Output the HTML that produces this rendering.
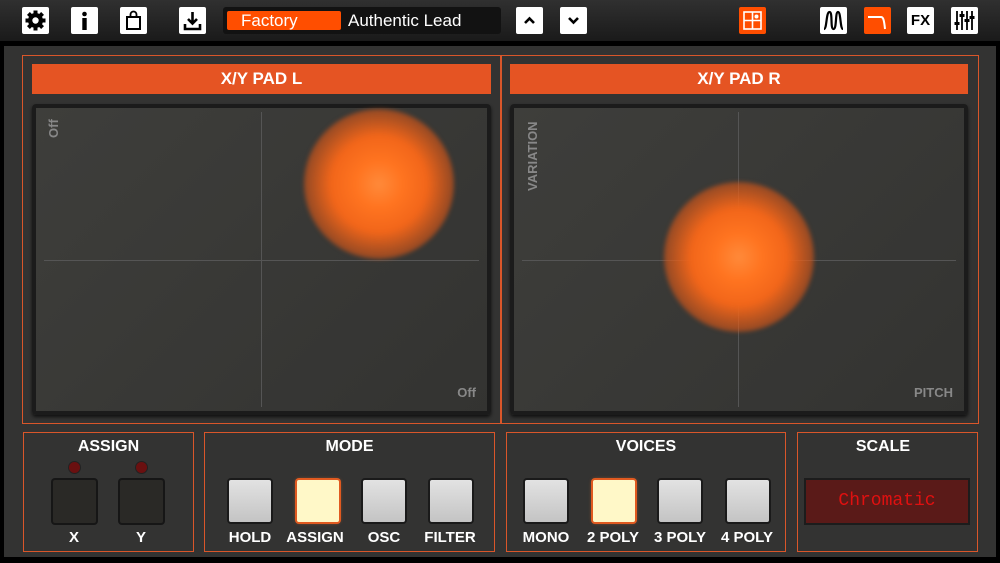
<!DOCTYPE html>
<html><head><style>
*{margin:0;padding:0;box-sizing:border-box}
body{width:1000px;height:563px;background:#000;position:relative;overflow:hidden;font-family:"Liberation Sans",sans-serif}
.a{position:absolute}
.top{left:0;top:0;width:1000px;height:41px;background:linear-gradient(#303030,#1a1a1a)}
.ib{position:absolute;top:7px;width:27px;height:27px;background:#fff;border-radius:2px}
.ib svg{position:absolute;left:0;top:0}
.panel{left:4px;top:46px;width:992px;height:511px;background:#333332}
.ob{position:absolute;border:1.5px solid #d9562a}
.hd{position:absolute;background:#e55423;color:#fff;font-weight:bold;font-size:17px;text-align:center;line-height:30px;height:30px}
.pad{position:absolute;background:linear-gradient(135deg,#3e3e3b,#333331);border-radius:4px;box-shadow:inset 0 0 0 4px #1b1b1b, 0 2px 3px #111}
.lbl{position:absolute;color:#fff;font-weight:bold;text-align:center}
.bt{position:absolute;top:480px;width:42px;height:42px;border-radius:2px;background:linear-gradient(#e2e2e2,#c4c4c4);box-shadow:0 0 0 2px #1a1a1a}
.on{background:#fff8c8;box-shadow:0 0 0 2px #e05a20,0 0 4px #f07030}
.bl{position:absolute;top:529px;color:#fff;font-weight:bold;font-size:15px;width:80px;text-align:center}
.blob{position:absolute;width:150px;height:150px;border-radius:50%;background:radial-gradient(circle,#ff8a3a 0,#ff7420 22%,#f2661a 45%,rgba(225,88,22,.55) 70%,rgba(200,80,20,0) 100%);filter:blur(2px)}
</style></head><body>
<div class="a top"></div>
<div class="ib" style="left:22px"><svg width="27" height="27"><g transform="translate(13.5 13.5)" fill="#000"><circle r="7.5"/><g><rect x="-2" y="-10" width="4" height="20"/><rect x="-10" y="-2" width="20" height="4"/><rect x="-2" y="-10" width="4" height="20" transform="rotate(45)"/><rect x="-2" y="-10" width="4" height="20" transform="rotate(-45)"/></g><circle r="3.2" fill="#fff"/></g></svg></div>
<div class="ib" style="left:71px"><svg width="27" height="27"><circle cx="13.5" cy="7" r="2.3"/><rect x="11.3" y="11" width="4.4" height="12"/></svg></div>
<div class="ib" style="left:120px"><svg width="27" height="27"><rect x="7" y="10" width="13" height="12" fill="none" stroke="#000" stroke-width="2"/><path d="M10.5 10V7.5a3 3 0 0 1 6 0V10" fill="none" stroke="#000" stroke-width="1.8"/></svg></div>
<div class="ib" style="left:179px"><svg width="27" height="27"><path d="M13.5 5v11M9 12l4.5 4.5L18 12M6 17v5h15v-5" fill="none" stroke="#000" stroke-width="2.6"/></svg></div>
<div class="a" style="left:223px;top:7px;width:278px;height:27px;background:#121212;border-radius:3px"></div>
<div class="a" style="left:227px;top:11px;width:114px;height:19px;background:#ff4e00;border-radius:2px;color:#fff;font-size:17px;line-height:19px;padding-left:14px">Factory</div>
<div class="a" style="left:348px;top:11px;color:#fff;font-size:17px;line-height:19px">Authentic Lead</div>
<div class="ib" style="left:516px"><svg width="27" height="27"><path d="M9 16l4.5-4.5L18 16" fill="none" stroke="#000" stroke-width="2.6"/></svg></div>
<div class="ib" style="left:560px"><svg width="27" height="27"><path d="M9 11l4.5 4.5L18 11" fill="none" stroke="#000" stroke-width="2.6"/></svg></div>
<div class="ib" style="left:739px;background:#ff4e00"><svg width="27" height="27"><rect x="5" y="5" width="17" height="17" fill="none" stroke="#fff" stroke-width="1.6"/><path d="M13.5 5v17M5 13.5h17" stroke="#fff" stroke-width="1.6"/><circle cx="17.5" cy="9.5" r="2" fill="#fff"/></svg></div>
<div class="ib" style="left:820px"><svg width="27" height="27"><path d="M4 22c3 0 2-17 5.5-17S10 22 13.5 22 15 5 18 5s2 17 5 17" fill="none" stroke="#000" stroke-width="2.2"/></svg></div>
<div class="ib" style="left:864px;background:#ff4e00"><svg width="27" height="27"><path d="M4 10h13c2 0 3 2 4 12" fill="none" stroke="#fff" stroke-width="2"/></svg></div>
<div class="ib" style="left:907px"><div style="position:absolute;left:0;top:0;width:27px;text-align:center;font-weight:bold;font-size:15px;line-height:27px;color:#000">FX</div></div>
<div class="ib" style="left:951px"><svg width="27" height="27"><path d="M6 4v19M11 4v19M16 4v19M21 4v19" stroke="#000" stroke-width="1.8"/><rect x="3.5" y="15" width="5" height="3"/><rect x="8.5" y="7" width="5" height="3"/><rect x="13.5" y="12" width="5" height="3"/><rect x="18.5" y="9" width="5" height="3"/></svg></div>

<div class="a panel"></div>
<div class="ob" style="left:22px;top:55px;width:957px;height:369px"></div>
<div class="a" style="left:500px;top:56px;width:1.5px;height:367px;background:#d9562a"></div>
<div class="hd" style="left:32px;top:64px;width:459px">X/Y PAD L</div>
<div class="hd" style="left:510px;top:64px;width:458px">X/Y PAD R</div>
<div class="pad" style="left:32px;top:104px;width:459px;height:311px;overflow:hidden">
<div class="a" style="left:229px;top:8px;width:1px;height:295px;background:#555"></div>
<div class="a" style="left:12px;top:156px;width:435px;height:1px;background:#555"></div>
<div class="blob" style="left:272px;top:5px"></div>
<div class="a" style="left:14px;top:34px;color:#888;font-size:13px;font-weight:bold;transform:rotate(-90deg);transform-origin:left top">Off</div>
<div class="a" style="right:15px;top:281px;color:#888;font-size:13px;font-weight:bold">Off</div>
</div>
<div class="pad" style="left:510px;top:104px;width:458px;height:311px;overflow:hidden">
<div class="a" style="left:228px;top:8px;width:1px;height:295px;background:#555"></div>
<div class="a" style="left:12px;top:156px;width:434px;height:1px;background:#555"></div>
<div class="blob" style="left:154px;top:78px"></div>
<div class="a" style="left:15px;top:87px;color:#888;font-size:13px;font-weight:bold;transform:rotate(-90deg);transform-origin:left top">VARIATION</div>
<div class="a" style="right:15px;top:281px;color:#888;font-size:13px;font-weight:bold">PITCH</div>
</div>

<div class="ob" style="left:23px;top:432px;width:171px;height:120px"></div>
<div class="ob" style="left:204px;top:432px;width:291px;height:120px"></div>
<div class="ob" style="left:506px;top:432px;width:280px;height:120px"></div>
<div class="ob" style="left:797px;top:432px;width:181px;height:120px"></div>
<div class="lbl" style="left:23px;top:438px;width:171px;font-size:16px">ASSIGN</div>
<div class="lbl" style="left:204px;top:438px;width:291px;font-size:16px">MODE</div>
<div class="lbl" style="left:506px;top:438px;width:280px;font-size:16px">VOICES</div>
<div class="lbl" style="left:797px;top:438px;width:172px;font-size:16px">SCALE</div>

<div class="a" style="left:69px;top:462px;width:11px;height:11px;border-radius:50%;background:#6a1010;box-shadow:0 0 0 1px #222"></div>
<div class="a" style="left:136px;top:462px;width:11px;height:11px;border-radius:50%;background:#6a1010;box-shadow:0 0 0 1px #222"></div>
<div class="bt" style="left:53px;width:43px;height:43px;background:#2a2926;box-shadow:0 0 0 2px #161616"></div>
<div class="bt" style="left:120px;width:43px;height:43px;background:#2a2926;box-shadow:0 0 0 2px #161616"></div>
<div class="bl" style="left:34px">X</div>
<div class="bl" style="left:101px">Y</div>

<div class="bt" style="left:229px"></div>
<div class="bt on" style="left:297px"></div>
<div class="bt" style="left:363px"></div>
<div class="bt" style="left:430px"></div>
<div class="bl" style="left:210px">HOLD</div>
<div class="bl" style="left:275px">ASSIGN</div>
<div class="bl" style="left:344px">OSC</div>
<div class="bl" style="left:410px">FILTER</div>

<div class="bt" style="left:525px"></div>
<div class="bt on" style="left:593px"></div>
<div class="bt" style="left:659px"></div>
<div class="bt" style="left:727px"></div>
<div class="bl" style="left:506px">MONO</div>
<div class="bl" style="left:573px">2 POLY</div>
<div class="bl" style="left:640px">3 POLY</div>
<div class="bl" style="left:707px">4 POLY</div>

<div class="a" style="left:806px;top:480px;width:162px;height:43px;background:#5a1a18;box-shadow:0 0 0 2px #1c1c1c;color:#e01010;font-family:'Liberation Mono',monospace;font-size:18px;text-align:center;line-height:43px">Chromatic</div>
</body></html>
